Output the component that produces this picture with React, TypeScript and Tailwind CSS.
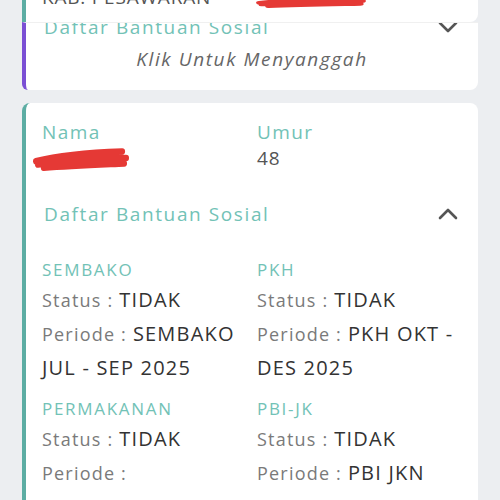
import React from "react";

const font = { fontFamily: '"Open Sans", "Noto Sans", sans-serif' };

function Chevron({ up = false }: { up?: boolean }) {
  return (
    <svg width="20" height="12" viewBox="0 0 20 12" fill="none">
      <polyline
        points={up ? "2,10 10,2 18,10" : "2,2 10,10 18,2"}
        stroke="#555"
        strokeWidth="2.6"
        strokeLinecap="round"
        strokeLinejoin="round"
      />
    </svg>
  );
}

function Scribble({ className }: { className?: string }) {
  return (
    <svg className={className} viewBox="0 0 100 24" preserveAspectRatio="none" fill="none">
      <path
        d="M4 15 C 30 9, 60 7, 92 6 M6 18 C 35 14, 70 12, 96 12 M12 21 C 40 19, 70 18, 94 17"
        stroke="#e53935"
        strokeWidth="6"
        strokeLinecap="round"
      />
    </svg>
  );
}

type Item = { name: string; periode: string };

const items: Item[] = [
  { name: "SEMBAKO", periode: "SEMBAKO JUL - SEP 2025" },
  { name: "PKH", periode: "PKH OKT - DES 2025" },
  { name: "PERMAKANAN", periode: "" },
  { name: "PBI-JK", periode: "PBI JKN DESEMBER 2025" },
];

export default function App() {
  return (
    <div className="w-[500px] h-[500px] overflow-hidden bg-[#eceef1] px-[22px]" style={font}>
      {/* top card, mostly scrolled away */}
      <div className="relative z-10 h-[22px] bg-white border-l-4 border-[#5cada3] rounded-br-lg overflow-hidden">
        <div className="relative -mt-[16px] pl-[16px] flex items-center">
          <span className="text-[19px] leading-[26px] text-[#555] tracking-[0.8px]">KAB. PESAWARAN</span>
          <Scribble className="absolute left-[229px] top-[10px] w-[112px] h-[14px]" />
        </div>
      </div>

      {/* collapsed section card */}
      <div className="h-[68px] bg-white border-l-4 border-[#7a4fd4] rounded-bl-md rounded-br-lg overflow-hidden border-t border-t-[#f0f0f0]">
        <div className="-mt-[9px] pl-[18px] pr-[20px] flex items-center justify-between">
          <span className="text-[19px] leading-[26px] text-[#72c2b6] tracking-[1.6px]">Daftar Bantuan Sosial</span>
          <Chevron />
        </div>
        <div className="mt-[6px] text-center text-[19px] leading-[26px] italic text-[#666] tracking-[1.6px]">
          Klik Untuk Menyanggah
        </div>
      </div>

      {/* open card */}
      <div className="mt-[13px] bg-white border-l-4 border-[#5cada3] rounded-lg pl-[16px] pr-[16px] pt-[16px] pb-6">
        <div className="grid grid-cols-2 gap-x-[10px]">
          <div>
            <div className="text-[19px] leading-[26px] text-[#72c2b6] tracking-[1.4px]">Nama</div>
            <div className="relative h-[27px]">
              <Scribble className="absolute -left-[10px] top-[0px] w-[98px] h-[26px]" />
            </div>
          </div>
          <div>
            <div className="text-[19px] leading-[26px] text-[#72c2b6] tracking-[1.4px]">Umur</div>
            <div className="text-[19px] leading-[27px] text-[#555] tracking-[1px]">48</div>
          </div>
        </div>

        <div className="mt-[29px] pl-[2px] pr-[4px] flex items-center justify-between">
          <span className="text-[19px] leading-[26px] text-[#72c2b6] tracking-[1.6px]">Daftar Bantuan Sosial</span>
          <Chevron up />
        </div>

        <div className="mt-[30px] grid grid-cols-2 gap-x-[10px] gap-y-[12px]">
          {items.map((it) => (
            <div key={it.name}>
              <div className="text-[17px] leading-[26px] font-medium text-[#72c2b6] tracking-[1.7px]">{it.name}</div>
              <div className="text-[20px] leading-[33px] text-[#333] tracking-[1.2px]">
                <span className="text-[18px] text-[#7a7a7a]">Status : </span>TIDAK
              </div>
              <div className="text-[20px] leading-[33px] text-[#333] tracking-[1.2px]">
                <span className="text-[18px] text-[#7a7a7a]">Periode : </span>
                {it.periode}
              </div>
            </div>
          ))}
        </div>
      </div>
    </div>
  );
}
